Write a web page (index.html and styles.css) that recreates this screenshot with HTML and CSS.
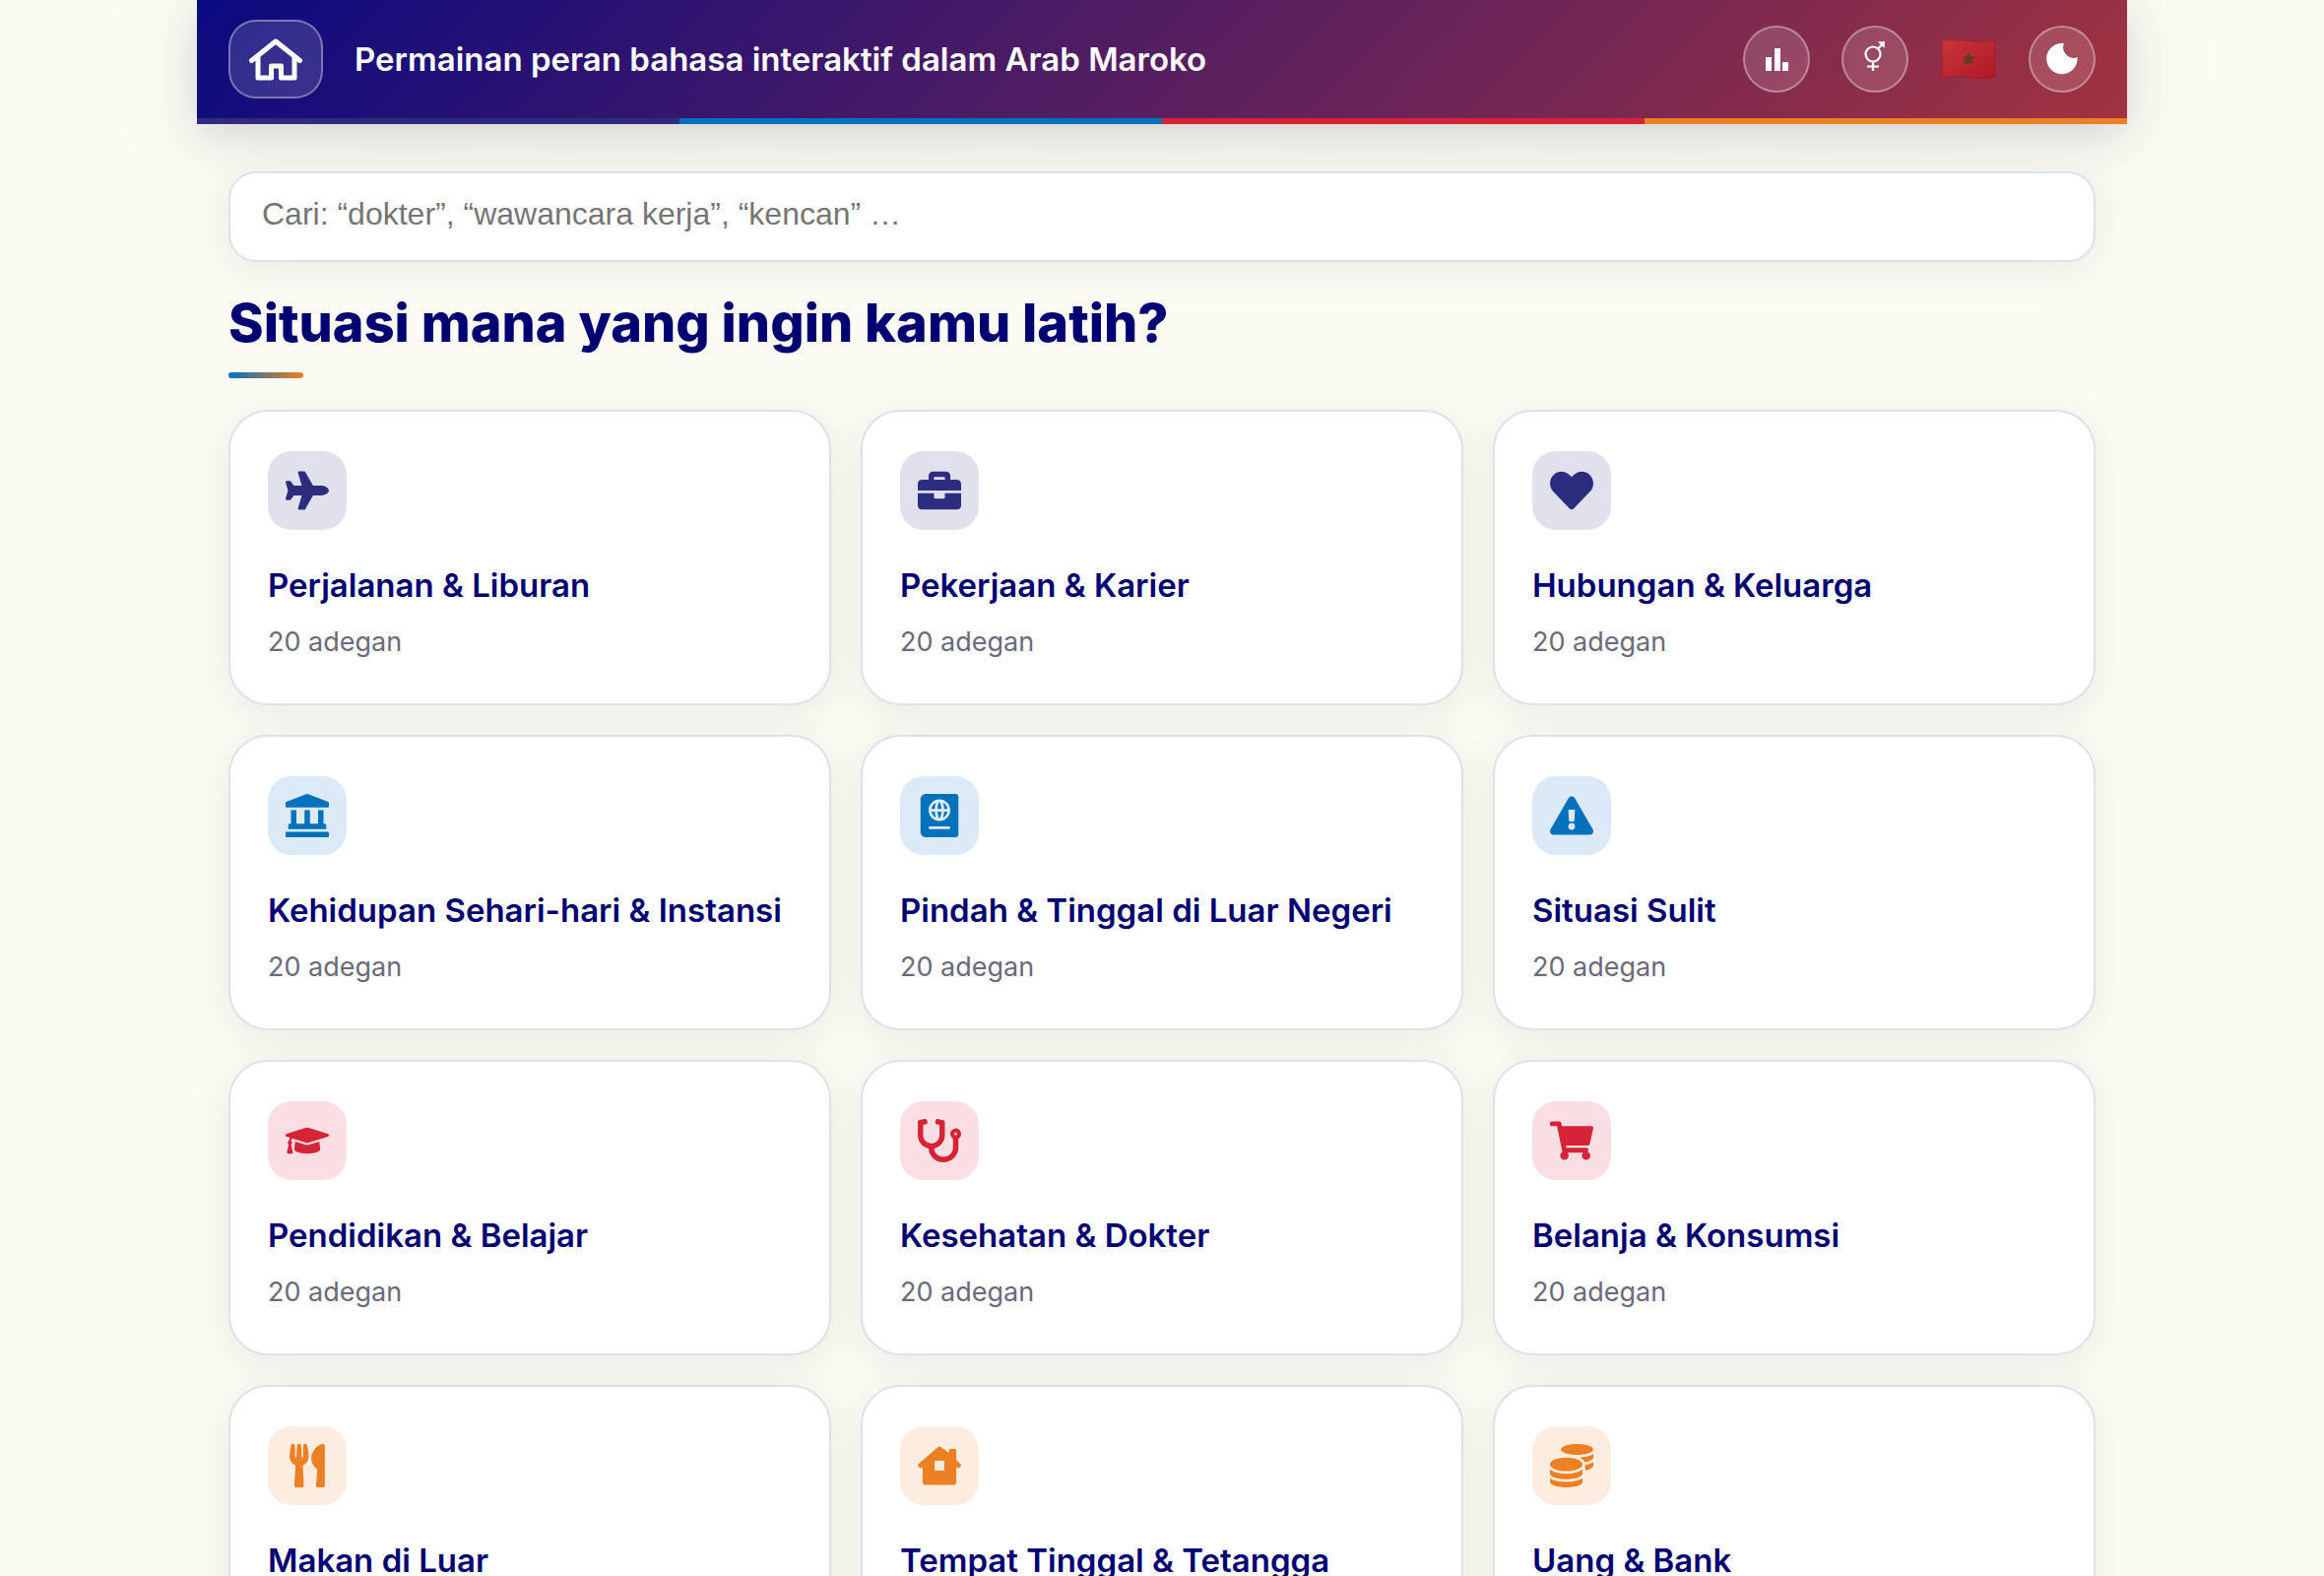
FILE: index.html
```html
<!DOCTYPE html>
<html lang="id">
<head>
  <meta charset="UTF-8">
  <meta name="viewport" content="width=device-width, initial-scale=1">
  <title>Permainan peran bahasa interaktif</title>
  <link rel="stylesheet" href="styles.css">
</head>
<body>

<div class="container">
  <header class="header">
    <div class="header-row">
      <a class="home-button" href="#" aria-label="Beranda">
        <svg width="56" height="48" viewBox="0 0 56 48" fill="none" stroke="currentColor" stroke-width="5" stroke-linecap="round" stroke-linejoin="round">
          <path d="M3.5 25.5 28 6l24.500 19.500M10 21.500V43h13.500V31h10v12H47V21.500"/>
        </svg>
      </a>
      <p class="header-title">Permainan peran bahasa interaktif dalam Arab Maroko</p>
      <div class="header-actions">
        <button class="round-button" type="button" aria-label="Statistik">
          <svg width="24" height="24" viewBox="0 0 24 24" fill="currentColor"><path d="M1 10h6v14H1zM10 1h6v23h-6zM18 15h6v9h-6z"/></svg>
        </button>
        <button class="round-button" type="button" aria-label="Gender">
          <svg width="28" height="40" viewBox="0 0 28 40" fill="none" stroke="currentColor" stroke-width="2.200">
            <circle cx="12" cy="15" r="7.500"/>
            <path d="M12 22.500V32M6 27.500h12M17 9.500l5-5"/>
            <path d="M17 2.500 24 2l-.5 7z" fill="currentColor" stroke="none"/>
          </svg>
        </button>
        <button class="flag-button" type="button" aria-label="Arab Maroko">
          <svg width="56" height="40" viewBox="0 0 56 40">
            <defs>
              <linearGradient id="flagShade" x1="0" y1="0" x2="1" y2="1">
                <stop offset="0" stop-color="#c8353d"/>
                <stop offset="1" stop-color="#b01824"/>
              </linearGradient>
            </defs>
            <path d="M1 1.500C20-2 32 5 55 1v37c-20 5-32-4-54 1z" fill="url(#flagShade)" stroke="#a51d26"/>
            <path d="m28 14 1.500 4.200H34l-3.500 2.600 1.300 4.200-3.800-2.500-3.800 2.500 1.300-4.200-3.500-2.600h4.500z" fill="#4d4420" stroke="#4d4420"/>
          </svg>
        </button>
        <button class="round-button" type="button" aria-label="Mode gelap">
          <svg width="32" height="32" viewBox="0 0 32 32" fill="currentColor"><path d="M18 0a10.500 10.500 0 0 0 13.500 14A15.700 15.700 0 1 1 18 0z"/></svg>
        </button>
      </div>
    </div>
    <div class="color-strip"><span></span><span></span><span></span><span></span></div>
  </header>

  <main class="content">
    <input class="search" type="search" aria-label="Cari adegan" placeholder="Cari: “dokter”, “wawancara kerja”, “kencan” …">

    <h1>Situasi mana yang ingin kamu latih?</h1>

    <div class="grid">
      <a class="card indigo" href="#">
        <span class="icon"><svg viewBox="0 0 576 512"><path d="M480 192H365.71L260.61 8.06A16.014 16.014 0 0 0 246.71 0h-65.5c-10.63 0-18.3 10.17-15.38 20.39L214.86 192H112l-43.2-57.6c-3.02-4.03-7.77-6.4-12.8-6.4H16.01C5.6 128-2.04 137.78.49 147.88L32 256 .49 364.12C-2.04 374.22 5.6 384 16.01 384H56c5.04 0 9.78-2.37 12.8-6.4L112 320h102.86l-49.03 171.6c-2.92 10.22 4.75 20.4 15.38 20.4h65.5c5.74 0 11.04-3.08 13.89-8.06L365.71 320H480c35.35 0 96-28.65 96-64s-60.65-64-96-64z"/></svg></span>
        <h2>Perjalanan &amp; Liburan</h2>
        <p>20 adegan</p>
      </a>
      <a class="card indigo" href="#">
        <span class="icon"><svg viewBox="0 0 512 512"><path d="M320 336c0 8.84-7.16 16-16 16h-96c-8.84 0-16-7.16-16-16v-48H0v144c0 25.6 22.4 48 48 48h416c25.6 0 48-22.4 48-48V288H320v48zm144-208h-80V80c0-25.6-22.4-48-48-48H176c-25.6 0-48 22.4-48 48v48H48c-25.6 0-48 22.4-48 48v80h512v-80c0-25.6-22.4-48-48-48zm-144 0H192V96h128v32z"/></svg></span>
        <h2>Pekerjaan &amp; Karier</h2>
        <p>20 adegan</p>
      </a>
      <a class="card indigo" href="#">
        <span class="icon"><svg viewBox="0 0 512 512"><path d="M462.3 62.6C407.5 15.9 326 24.3 275.7 76.2L256 96.5l-19.7-20.3C186.1 24.3 104.5 15.9 49.7 62.6c-62.8 53.6-66.1 149.8-9.9 207.9l193.5 199.8c12.5 12.9 32.8 12.9 45.3 0l193.5-199.8c56.3-58.1 53-154.3-9.8-207.9z"/></svg></span>
        <h2>Hubungan &amp; Keluarga</h2>
        <p>20 adegan</p>
      </a>

      <a class="card blue" href="#">
        <span class="icon"><svg viewBox="0 0 512 512"><path d="M501.62 92.11L267.24 2.04a31.958 31.958 0 0 0-22.47 0L10.38 92.11A16.001 16.001 0 0 0 0 107.09V144c0 8.84 7.16 16 16 16h480c8.84 0 16-7.16 16-16v-36.91c0-6.67-4.14-12.64-10.38-14.98zM64 192v160H48c-8.84 0-16 7.16-16 16v48h448v-48c0-8.84-7.16-16-16-16h-16V192h-64v160h-96V192h-64v160h-96V192H64zm432 256H16c-8.84 0-16 7.16-16 16v32c0 8.84 7.16 16 16 16h480c8.84 0 16-7.16 16-16v-32c0-8.84-7.16-16-16-16z"/></svg></span>
        <h2>Kehidupan Sehari-hari &amp; Instansi</h2>
        <p>20 adegan</p>
      </a>
      <a class="card blue" href="#">
        <span class="icon"><svg viewBox="0 0 448 512"><path d="M129.62 176h39.09c1.49-27.03 6.54-51.35 14.21-70.41-27.71 13.24-48.02 39.19-53.3 70.41zm0 32c5.29 31.22 25.59 57.17 53.3 70.41-7.68-19.06-12.72-43.38-14.21-70.41h-39.09zM224 286.69c7.69-7.45 20.77-34.42 23.43-78.69h-46.87c2.67 44.26 15.75 71.24 23.44 78.69zM200.57 176h46.87c-2.66-44.26-15.74-71.24-23.43-78.69-7.7 7.45-20.78 34.43-23.44 78.69zm64.51 102.41c27.71-13.24 48.02-39.19 53.3-70.41h-39.09c-1.49 27.03-6.53 51.35-14.21 70.41zM416 0H64C28.65 0 0 28.65 0 64v384c0 35.35 28.65 64 64 64h352c17.67 0 32-14.33 32-32V32c0-17.67-14.33-32-32-32zm-80 416H112c-8.8 0-16-7.2-16-16s7.2-16 16-16h224c8.8 0 16 7.2 16 16s-7.2 16-16 16zm-112-96c-70.69 0-128-57.31-128-128S153.31 64 224 64s128 57.31 128 128-57.31 128-128 128zm41.08-214.41c7.68 19.06 12.72 43.38 14.21 70.41h39.09c-5.28-31.22-25.59-57.17-53.3-70.41z"/></svg></span>
        <h2>Pindah &amp; Tinggal di Luar Negeri</h2>
        <p>20 adegan</p>
      </a>
      <a class="card blue" href="#">
        <span class="icon"><svg viewBox="0 0 576 512"><path d="M569.517 440.013C587.975 472.007 564.806 512 527.94 512H48.054c-36.937 0-59.999-40.055-41.577-71.987L246.423 23.985c18.467-32.009 64.72-31.951 83.154 0l239.94 416.028zM288 354c-25.405 0-46 20.595-46 46s20.595 46 46 46 46-20.595 46-46-20.595-46-46-46zm-43.673-165.346l7.418 136c.347 6.364 5.609 11.346 11.982 11.346h48.546c6.373 0 11.635-4.982 11.982-11.346l7.418-136c.375-6.874-5.098-12.654-11.982-12.654h-63.383c-6.884 0-12.356 5.78-11.981 12.654z"/></svg></span>
        <h2>Situasi Sulit</h2>
        <p>20 adegan</p>
      </a>

      <a class="card red" href="#">
        <span class="icon"><svg viewBox="0 0 640 512"><path d="M622.34 153.2L343.4 67.5c-15.2-4.67-31.6-4.67-46.79 0L17.66 153.2c-23.54 7.23-23.54 38.36 0 45.59l48.63 14.94c-10.67 13.19-17.23 29.28-17.88 46.9C38.78 266.15 32 276.11 32 288c0 10.78 5.68 19.85 13.86 25.65L20.33 428.53C18.11 438.52 25.71 448 35.94 448h56.11c10.24 0 17.84-9.48 15.62-19.47L82.14 313.65C90.32 307.85 96 298.78 96 288c0-11.57-6.47-21.25-15.66-26.87.76-15.02 8.44-28.3 20.69-36.72L296.6 284.5c9.06 2.78 26.44 6.25 46.79 0l278.95-85.7c23.55-7.24 23.55-38.36 0-45.6zM352.79 315.09c-28.53 8.76-52.84 3.92-65.59 0l-145.02-44.55L128 384c0 35.35 85.96 64 192 64s192-28.65 192-64l-14.18-113.47-145.03 44.56z"/></svg></span>
        <h2>Pendidikan &amp; Belajar</h2>
        <p>20 adegan</p>
      </a>
      <a class="card red" href="#">
        <span class="icon"><svg viewBox="0 0 512 512"><path d="M447.1 112c-34.2.5-62.3 28.4-63 62.6-.5 24.3 12.5 45.6 32 56.8V344c0 57.3-50.2 104-112 104-60 0-109.2-44.1-111.9-99.2C265 333.8 320 269.2 320 192V36.6c0-11.4-8.1-21.3-19.3-23.5L237.8.5c-13-2.6-25.6 5.8-28.2 18.8L206.4 35c-2.6 13 5.8 25.6 18.8 28.2l30.7 6.1v121.4c0 52.9-42.2 96.7-95.1 97.2-53.4.5-96.9-42.7-96.9-96V69.4l30.7-6.1c13-2.6 21.4-15.2 18.8-28.2l-3.1-15.7C107.7 6.4 95.1-2 82.1.6L19.3 13C8.1 15.3 0 25.1 0 36.6V192c0 77.3 55.1 142 128.1 156.8C130.7 439.2 208.6 512 304 512c97 0 176-75.4 176-168V231.4c19.1-11.1 32-31.7 32-55.4 0-35.7-29.2-64.5-64.9-64zm.9 80c-8.8 0-16-7.2-16-16s7.2-16 16-16 16 7.2 16 16-7.2 16-16 16z"/></svg></span>
        <h2>Kesehatan &amp; Dokter</h2>
        <p>20 adegan</p>
      </a>
      <a class="card red" href="#">
        <span class="icon"><svg viewBox="0 0 576 512"><path d="M528.12 301.319l47.273-208C578.806 78.301 567.391 64 551.99 64H159.208l-9.166-44.81C147.758 8.021 137.93 0 126.529 0H24C10.745 0 0 10.745 0 24v16c0 13.255 10.745 24 24 24h69.883l70.248 343.435C147.325 417.1 136 435.222 136 456c0 30.928 25.072 56 56 56s56-25.072 56-56c0-15.674-6.447-29.835-16.824-40h209.647C430.447 426.165 424 440.326 424 456c0 30.928 25.072 56 56 56s56-25.072 56-56c0-22.172-12.888-41.332-31.579-50.405l5.517-24.276c3.413-15.018-8.002-29.319-23.403-29.319H218.117l-6.545-32h293.145c11.206 0 20.92-7.754 23.403-18.681z"/></svg></span>
        <h2>Belanja &amp; Konsumsi</h2>
        <p>20 adegan</p>
      </a>

      <a class="card orange" href="#">
        <span class="icon"><svg viewBox="0 0 416 512"><path d="M207.9 15.2c.8 4.7 16.1 94.5 16.1 128.8 0 52.3-27.8 89.6-68.9 104.6L168 486.7c.7 13.7-10.2 25.3-24 25.3H80c-13.7 0-24.7-11.5-24-25.3l12.9-238.1C27.7 233.6 0 196.2 0 144 0 109.6 15.3 19.9 16.1 15.2 19.3-5.1 61.4-5.4 64 16.3v141.2c1.3 3.4 15.1 3.2 16 0 1.4-25.3 7.9-139.2 8-141.8 3.3-20.8 44.7-20.8 47.9 0 .2 2.7 6.6 116.5 8 141.8.9 3.2 14.8 3.4 16 0V16.3c2.6-21.6 44.8-21.4 48-1.1zm119.2 285.7l-15 185.1c-1.2 14 9.9 26 23.9 26h56c13.3 0 24-10.7 24-24V24c0-13.2-10.7-24-24-24-82.5 0-221.4 178.5-64.9 300.9z"/></svg></span>
        <h2>Makan di Luar</h2>
        <p>20 adegan</p>
      </a>
      <a class="card orange" href="#">
        <span class="icon"><svg viewBox="0 0 576 512"><path fill-rule="evenodd" d="M570 236 512 180V48c0-9-7-16-16-16h-64c-9 0-16 7-16 16v39L310 10c-13-12-31-12-44 0L6 236c-8 7-8 17-2 24l22 24c6 7 16 7 22 2l16-14v208c0 18 14 32 32 32h384c18 0 32-14 32-32V272l16 14c7 6 16 5 22-2l22-24c6-7 5-17-2-24zM240 192h96c9 0 16 7 16 16v96c0 9-7 16-16 16h-96c-9 0-16-7-16-16v-96c0-9 7-16 16-16z"/></svg></span>
        <h2>Tempat Tinggal &amp; Tetangga</h2>
        <p>20 adegan</p>
      </a>
      <a class="card orange" href="#">
        <span class="icon"><svg viewBox="0 0 512 512"><path d="M0 405.3V448c0 35.3 86 64 192 64s192-28.7 192-64v-42.7C342.7 434.4 267.2 448 192 448S41.3 434.4 0 405.3zM320 128c106 0 192-28.7 192-64S426 0 320 0 128 28.7 128 64s86 64 192 64zM0 300.4V352c0 35.3 86 64 192 64s192-28.7 192-64v-51.6c-41.3 34-116.9 51.6-192 51.6S41.3 334.4 0 300.4zm416 11c57.3-11.1 96-31.7 96-55.4v-42.7c-23.2 16.4-57.3 27.6-96 34.6v63.5zM192 160C86 160 0 195.8 0 240s86 80 192 80 192-35.8 192-80-86-80-192-80zm219.3 56.3c60-10.8 100.7-32 100.7-56.3v-42.7c-35.5 25.1-96.5 38.6-160.7 41.8 29.5 14.3 51.2 33.5 60 57.2z"/></svg></span>
        <h2>Uang &amp; Bank</h2>
        <p>20 adegan</p>
      </a>
    </div>
  </main>
</div>

</body>
</html>
```
FILE: styles.css
```css
* {
  box-sizing: border-box;
}

body {
  margin: 0;
  font-family: Inter, sans-serif;
  background: #fcfbf3;
  color: #000073;
}

.container {
  max-width: 1960px;
  margin: 0 auto;
}

/* Header */
.header {
  background: linear-gradient(135deg, #0a0a80, #a23340);
  box-shadow: 0 12px 48px rgba(10, 10, 50, 0.16), 0 0 240px rgba(10, 10, 50, 0.04);
}

.header-row {
  display: flex;
  align-items: center;
  gap: 32px;
  padding: 20px 32px;
}

.home-button {
  display: flex;
  align-items: center;
  justify-content: center;
  width: 96px;
  height: 80px;
  border: 2px solid rgba(255, 255, 255, 0.35);
  border-radius: 28px;
  background: rgba(255, 255, 255, 0.14);
  color: #fff;
}

.header-title {
  flex: 1;
  margin: 0;
  font-size: 33px;
  font-weight: 600;
  line-height: 40px;
  color: #fff;
}

.header-actions {
  display: flex;
  align-items: center;
  gap: 32px;
}

.round-button,
.flag-button {
  display: flex;
  align-items: center;
  justify-content: center;
  height: 68px;
  padding: 0;
  border: none;
  background: none;
  color: #fff;
  cursor: pointer;
}

.round-button {
  width: 68px;
  border: 2px solid rgba(255, 255, 255, 0.35);
  border-radius: 50%;
  background: rgba(255, 255, 255, 0.14);
}

.flag-button {
  width: 58px;
}

.color-strip {
  display: grid;
  grid-template-columns: repeat(4, 1fr);
  height: 6px;
}

.color-strip span:nth-child(1) { background: #2d2d80; }
.color-strip span:nth-child(2) { background: #0072bc; }
.color-strip span:nth-child(3) { background: #d62436; }
.color-strip span:nth-child(4) { background: #ec8022; }

/* Content */
.content {
  padding: 48px 32px;
}

.search {
  display: block;
  width: 100%;
  height: 92px;
  padding: 0 32px 6px;
  border: 2px solid #dfe0ea;
  border-radius: 28px;
  background: #fff;
  box-shadow: 0 8px 40px rgba(10, 10, 50, 0.08);
  font-family: "Liberation Sans", Arial, sans-serif;
  font-size: 32px;
  outline: none;
  appearance: none;
}

.search::placeholder {
  color: #757575;
}

h1 {
  margin: 28px 0 32px;
  font-size: 54px;
  font-weight: 800;
  line-height: 68px;
}

h1::after {
  content: "";
  display: block;
  width: 76px;
  height: 6px;
  margin-top: 16px;
  border-radius: 3px;
  background: linear-gradient(90deg, #0072bc, #ec8022);
}

.grid {
  display: grid;
  grid-template-columns: repeat(auto-fill, minmax(480px, 1fr));
  gap: 30px;
}

.card {
  padding: 40px 38px;
  border: 2px solid #dfe0ea;
  border-radius: 40px;
  background: #fff;
  box-shadow: 0 8px 40px rgba(10, 10, 50, 0.08);
  color: #000073;
  text-decoration: none;
}

.icon {
  display: flex;
  align-items: center;
  justify-content: center;
  width: 80px;
  height: 80px;
  border-radius: 24px;
}

.icon svg {
  width: 44px;
  height: 44px;
  fill: currentColor;
}

.indigo .icon { background: #e1e1ed; color: #2d2d80; }
.blue .icon { background: #dbeaf6; color: #0072bc; }
.red .icon { background: #f9dfe3; color: #d62436; }
.orange .icon { background: #fdece0; color: #ec8022; }

.card h2 {
  margin: 36px 0 16px;
  font-size: 33px;
  font-weight: 600;
  line-height: 40px;
}

.card p {
  margin: 0;
  font-size: 27px;
  line-height: 44px;
  color: #6a6a7a;
}
```
